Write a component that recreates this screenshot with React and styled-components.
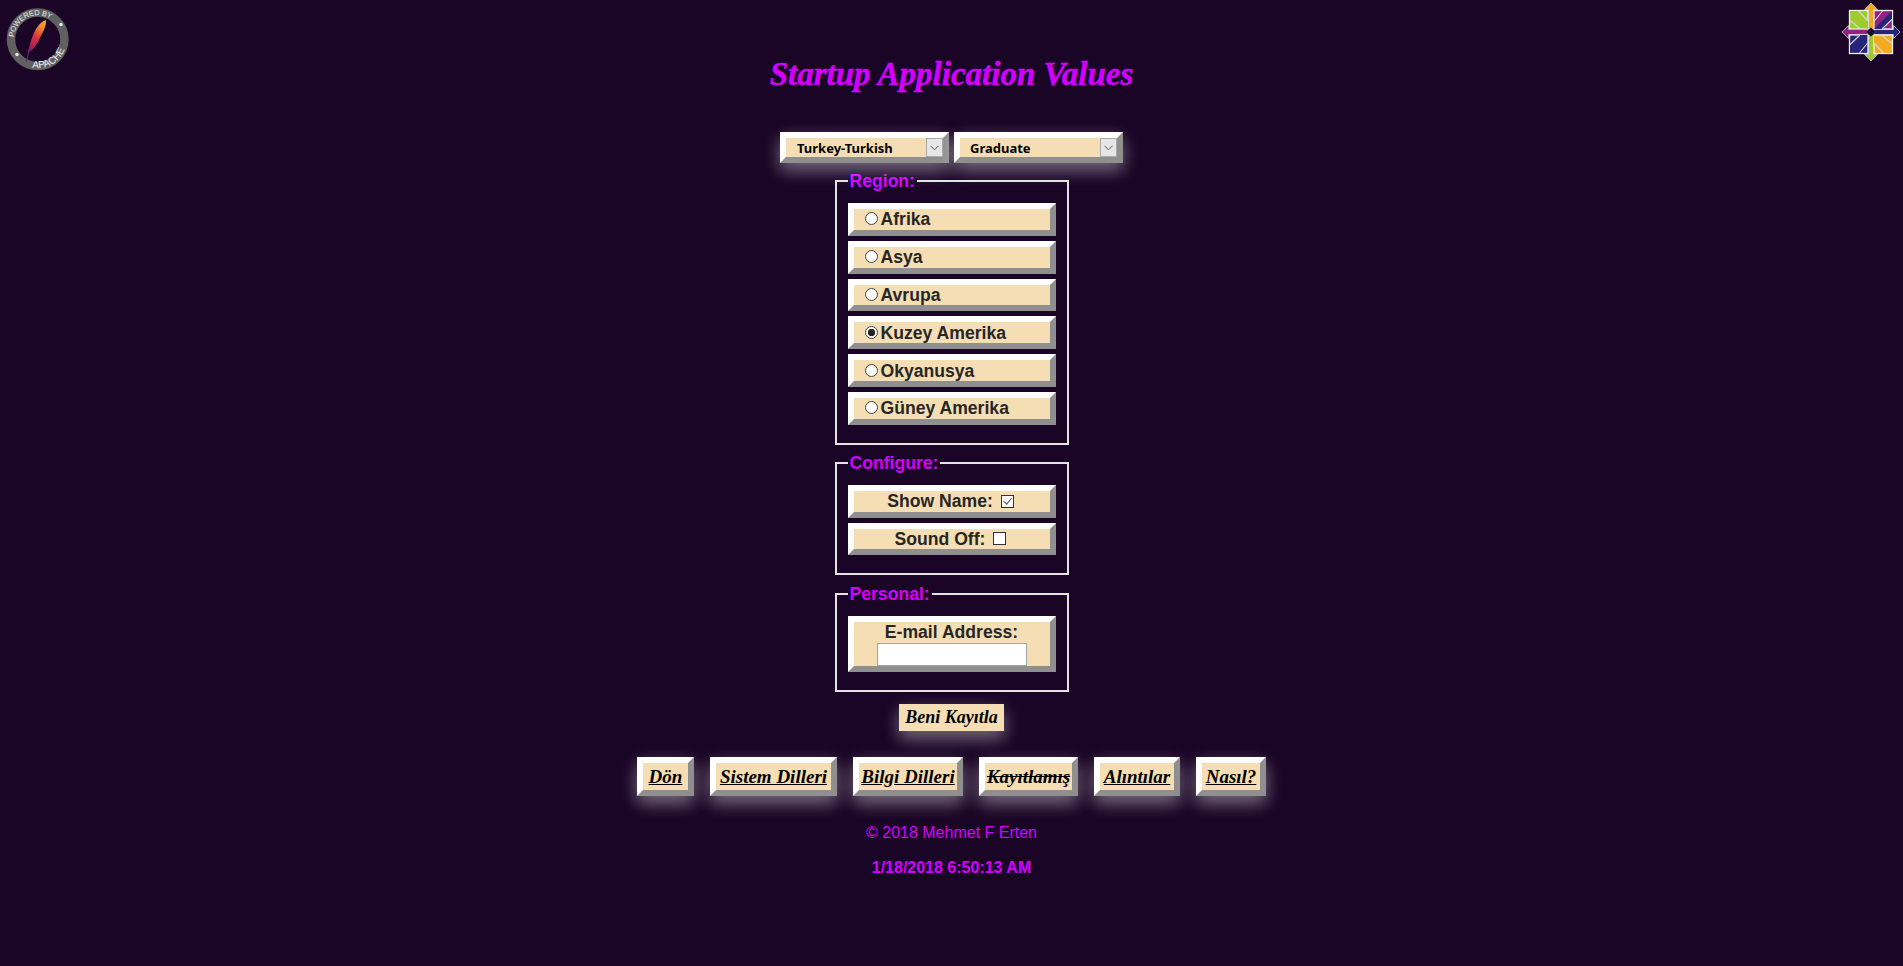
import React from 'react';
import styled, { createGlobalStyle, css } from 'styled-components';

const Global = createGlobalStyle`
  html, body {
    margin: 0;
    padding: 0;
    background: #1a0526;
  }
  body {
    font-family: "Liberation Sans", Arial, sans-serif;
  }
`;

const glow = css`
  box-shadow: 0 8px 16px 0 rgba(255, 255, 255, 0.24), 0 6px 20px 0 rgba(255, 255, 255, 0.22);
`;

const bevel = css`
  box-sizing: border-box;
  background: #f5deb3;
  border-style: solid;
  border-width: 6px;
  border-color: #fff #8f8f8f #8f8f8f #fff;
`;

const brush = css`
  font-family: "Liberation Serif", "Times New Roman", serif;
  font-style: italic;
  font-weight: 700;
`;

const Page = styled.div`
  min-height: 966px;
  display: flex;
  flex-direction: column;
  align-items: center;
`;

const Header = styled.header`
  width: 100%;
  height: 132px;
  display: grid;
  grid-template-columns: 1fr auto 1fr;
  align-items: start;
`;

const Title = styled.h1`
  ${brush}
  margin: 51px 0 0;
  font-size: 33px;
  line-height: 46px;
  color: #d400ff;
  -webkit-text-stroke: 0.4px #d400ff;
`;

const RightLogo = styled.div`
  display: flex;
  justify-content: flex-end;
`;

const Selects = styled.div`
  display: flex;
  gap: 5px;
  margin-bottom: 8px;
`;

const SelectBox = styled.div`
  ${bevel}
  ${glow}
  position: relative;
  width: 169px;
  height: 31px;
`;

const Select = styled.select`
  appearance: none;
  width: 100%;
  height: 19px;
  display: block;
  border: 0;
  outline: 0;
  padding: 0 0 0 ${(p) => p.$indent}px;
  background: transparent;
  color: #000;
  font: 700 13px "Noto Sans", sans-serif;
`;

const Arrow = styled.span`
  position: absolute;
  top: 0;
  right: 0;
  box-sizing: border-box;
  width: 17px;
  height: 19px;
  display: flex;
  align-items: center;
  justify-content: center;
  background: #e6e6e6;
  border: 1px solid #a9a9a9;
  pointer-events: none;
`;

const Group = styled.fieldset`
  box-sizing: border-box;
  width: 234px;
  margin: 0 0 ${(p) => p.$after}px;
  padding: 12px 11px 18px;
  border: 2px solid #e4e4e4;
  display: flex;
  flex-direction: column;
  gap: 5px;
`;

const Legend = styled.legend`
  padding: 0 2px;
  font-size: 17.6px;
  line-height: 20px;
  font-weight: 700;
  color: #d400ff;
`;

const Row = styled.label`
  ${bevel}
  height: 32.8px;
  display: flex;
  align-items: center;
  justify-content: ${(p) => (p.$center ? 'center' : 'flex-start')};
  padding: 1px ${(p) => (p.$center ? 2 : 0)}px 0 ${(p) => (p.$center ? 0 : 11)}px;
  font-size: 17.6px;
  font-weight: 700;
  color: #262626;
`;

const Radio = styled.input.attrs({ type: 'radio' })`
  appearance: none;
  box-sizing: border-box;
  width: 13px;
  height: 13px;
  margin: 0 3px 2px 0;
  border: 1px solid #444;
  border-radius: 50%;
  background: #fff;
  flex: none;
  &:checked {
    background: radial-gradient(circle, #222 0 3.4px, #fff 4px);
  }
`;

const Check = styled.input.attrs({ type: 'checkbox' })`
  appearance: none;
  box-sizing: border-box;
  position: relative;
  width: 13px;
  height: 13px;
  margin: 0 0 1px 8px;
  border: 1px solid #333;
  background: #fff;
  flex: none;
  &:checked::before {
    content: '';
    position: absolute;
    left: 3px;
    top: 0;
    width: 4px;
    height: 7px;
    border: solid #555;
    border-width: 0 1.4px 1.4px 0;
    transform: rotate(40deg);
  }
`;

const EmailRow = styled.label`
  ${bevel}
  height: 56px;
  display: flex;
  flex-direction: column;
  align-items: center;
  font-size: 17.6px;
  line-height: 21px;
  font-weight: 700;
  color: #262626;
`;

const Email = styled.input`
  box-sizing: border-box;
  width: 150px;
  height: 23px;
  display: block;
  border: 1px solid #a3a3a3;
  background: #fff;
  padding: 0;
`;

const Register = styled.button`
  ${brush}
  ${glow}
  box-sizing: border-box;
  width: 105px;
  height: 27px;
  margin: 0 0 26px;
  padding: 0;
  border: 0;
  background: #f5deb3;
  color: #000;
  font-size: 18px;
  line-height: 27px;
  white-space: nowrap;
`;

const Nav = styled.nav`
  display: flex;
  gap: 16px;
  margin-bottom: 27px;
`;

const NavLink = styled.a`
  ${bevel}
  ${brush}
  ${glow}
  width: ${(p) => p.$width}px;
  height: 39px;
  display: flex;
  align-items: center;
  justify-content: center;
  color: #000;
  font-size: 19px;
  white-space: nowrap;
  text-decoration: ${(p) => (p.$struck ? 'line-through' : 'underline')};
`;

const Copy = styled.p`
  margin: 0 0 16px;
  font-size: 16px;
  line-height: 19px;
  font-weight: ${(p) => (p.$bold ? 700 : 400)};
  color: #d400ff;
`;

const ApacheLogo = () => (
  <svg width="90" height="80" viewBox="0 0 90 80">
    <defs>
      <linearGradient id="feather" x1="46" y1="20" x2="27" y2="54" gradientUnits="userSpaceOnUse">
        <stop offset="0" stopColor="#f9a92f" />
        <stop offset="0.22" stopColor="#f08a2d" />
        <stop offset="0.5" stopColor="#d9333f" />
        <stop offset="0.8" stopColor="#a61d5e" />
        <stop offset="1" stopColor="#53307f" />
      </linearGradient>
      <path id="arc-top" d="M13.8 37.2 A24 24 0 0 1 51.5 19.6" />
      <path id="arc-bottom" d="M32 67.7 A29 29 0 0 0 64.5 50" />
    </defs>
    <circle cx="37.7" cy="39.3" r="26.75" fill="#1a0526" stroke="#606060" strokeWidth="8.5" />
    <path d="M46 20 C39 22 34 31 31 41 C29.5 46 28.5 50 27.5 53 C32 51 37 45 40 38 C43 32 46.5 26 46 20 Z" fill="url(#feather)" />
    <path d="M30 48 L26 62" stroke="#53307f" strokeWidth="1" />
    <circle cx="61" cy="24.5" r="1.7" fill="#eee" />
    <circle cx="17" cy="54.5" r="1.7" fill="#eee" />
    <text fontFamily="Liberation Sans, sans-serif" fontSize="7.5" fill="#eee">
      <textPath href="#arc-top" textLength="49">POWERED BY</textPath>
    </text>
    <text fontFamily="Liberation Sans, sans-serif" fontSize="10" fill="#eee">
      <textPath href="#arc-bottom">APACHE</textPath>
    </text>
  </svg>
);

const petals = [
  { rotate: 0, square: '#9ccc2f', tip: '#f4a922', accent: '#9ccc2f' },
  { rotate: 90, square: '#942280', tip: '#25257a', accent: '#25257a' },
  { rotate: 180, square: '#f4a922', tip: '#9ccc2f', accent: '#f4a922' },
  { rotate: 270, square: '#25257a', tip: '#942280', accent: '#25257a' },
];

const CentosLogo = () => (
  <svg width="83" height="70" viewBox="-51 -32 83 70">
    {petals.map((p) => (
      <g key={p.rotate} transform={`rotate(${p.rotate})`}>
        <path d="M0 -29 L6.5 -22.5 L2.5 -22.5 L2.5 -3 L-2.5 -3 L-2.5 -22.5 L-6.5 -22.5 Z" fill={p.tip} stroke="#cfcfd4" strokeWidth="0.7" />
        <rect x="-21.5" y="-21.5" width="18.5" height="18.5" fill={p.square} stroke="#f2f2f2" strokeWidth="1.3" />
        <path d="M-3 -3 L-3 -12 L-12 -21 L-21 -21 Z" fill={p.accent} />
        <path d="M-12.5 -21 L-3 -11 M-21 -11.5 L-10.5 -3" stroke="#d8d8dc" strokeWidth="1.1" fill="none" />
      </g>
    ))}
    <rect x="-3.2" y="-3.2" width="6.4" height="6.4" fill="#1a0526" transform="rotate(45)" />
  </svg>
);

const Chevron = () => (
  <svg width="9" height="6" viewBox="0 0 9 6">
    <path d="M0.5 0.8 L4.5 4.8 L8.5 0.8" fill="none" stroke="#555" strokeWidth="1" />
  </svg>
);

const regions = [
  { name: 'Afrika' },
  { name: 'Asya' },
  { name: 'Avrupa' },
  { name: 'Kuzey Amerika', checked: true },
  { name: 'Okyanusya' },
  { name: 'Güney Amerika' },
];

const links = [
  { label: 'Dön', width: 57 },
  { label: 'Sistem Dilleri', width: 127 },
  { label: 'Bilgi Dilleri', width: 110 },
  { label: 'Kayıtlamış', width: 99, struck: true },
  { label: 'Alıntılar', width: 86 },
  { label: 'Nasıl?', width: 70 },
];

const App = () => (
  <Page>
    <Global />
    <Header>
      <ApacheLogo />
      <Title>Startup Application Values</Title>
      <RightLogo>
        <CentosLogo />
      </RightLogo>
    </Header>
    <Selects>
      <SelectBox>
        <Select $indent={11} defaultValue="tr">
          <option value="tr">Turkey-Turkish</option>
        </Select>
        <Arrow><Chevron /></Arrow>
      </SelectBox>
      <SelectBox>
        <Select $indent={10} defaultValue="grad">
          <option value="grad">Graduate</option>
        </Select>
        <Arrow><Chevron /></Arrow>
      </SelectBox>
    </Selects>
    <Group $after={8}>
      <Legend>Region:</Legend>
      {regions.map((region) => (
        <Row key={region.name}>
          <Radio name="region" defaultChecked={region.checked} />
          {region.name}
        </Row>
      ))}
    </Group>
    <Group $after={9}>
      <Legend>Configure:</Legend>
      <Row $center>Show Name:<Check defaultChecked /></Row>
      <Row $center>Sound Off:<Check /></Row>
    </Group>
    <Group $after={12}>
      <Legend>Personal:</Legend>
      <EmailRow>
        E-mail Address:
        <Email type="text" />
      </EmailRow>
    </Group>
    <Register type="button">Beni Kayıtla</Register>
    <Nav>
      {links.map((link) => (
        <NavLink key={link.label} href="#" $width={link.width} $struck={link.struck}>
          {link.label}
        </NavLink>
      ))}
    </Nav>
    <Copy>© 2018 Mehmet F Erten</Copy>
    <Copy $bold>1/18/2018 6:50:13 AM</Copy>
  </Page>
);

export default App;
